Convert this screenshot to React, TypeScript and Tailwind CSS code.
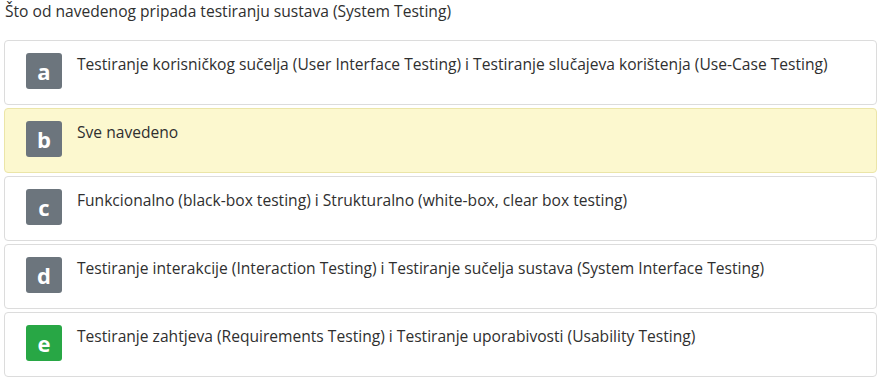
import React from "react";

const options = [
  { l: "a", t: "Testiranje korisničkog sučelja (User Interface Testing) i Testiranje slučajeva korištenja (Use-Case Testing)", sel: false, ok: false },
  { l: "b", t: "Sve navedeno", sel: true, ok: false },
  { l: "c", t: "Funkcionalno (black-box testing) i Strukturalno (white-box, clear box testing)", sel: false, ok: false },
  { l: "d", t: "Testiranje interakcije (Interaction Testing) i Testiranje sučelja sustava (System Interface Testing)", sel: false, ok: false },
  { l: "e", t: "Testiranje zahtjeva (Requirements Testing) i Testiranje uporabivosti (Usability Testing)", sel: false, ok: true },
];

export default function App() {
  return (
    <div className="w-[884px] h-[384px] bg-white text-[#2f2f2f] overflow-hidden" style={{ fontFamily: '"Open Sans", sans-serif' }}>
      <div className="px-[5px] h-[40px] text-[15.6px] leading-[22px]">
        Što od navedenog pripada testiranju sustava (System Testing)
      </div>
      <div className="flex flex-col gap-[3px] pl-[4px] pr-[7px]">
        {options.map((o) => (
          <div
            key={o.l}
            className={
              "h-[65px] rounded-[4px] border flex items-start pt-[12px] pl-[21px] " +
              (o.sel ? "bg-[#fcf8cf] border-[#ebe5a8]" : "bg-white border-[#dcdcdc]")
            }
          >
            <div
              className={
                "w-[36px] h-[36px] shrink-0 rounded-[3px] flex items-center justify-center text-white font-bold text-[22px] leading-none pb-[1px] " +
                (o.ok ? "bg-[#28a745]" : "bg-[#6c757d]")
              }
            >
              {o.l}
            </div>
            <div className="ml-[15px] text-[15.6px] leading-[22px]">{o.t}</div>
          </div>
        ))}
      </div>
    </div>
  );
}
